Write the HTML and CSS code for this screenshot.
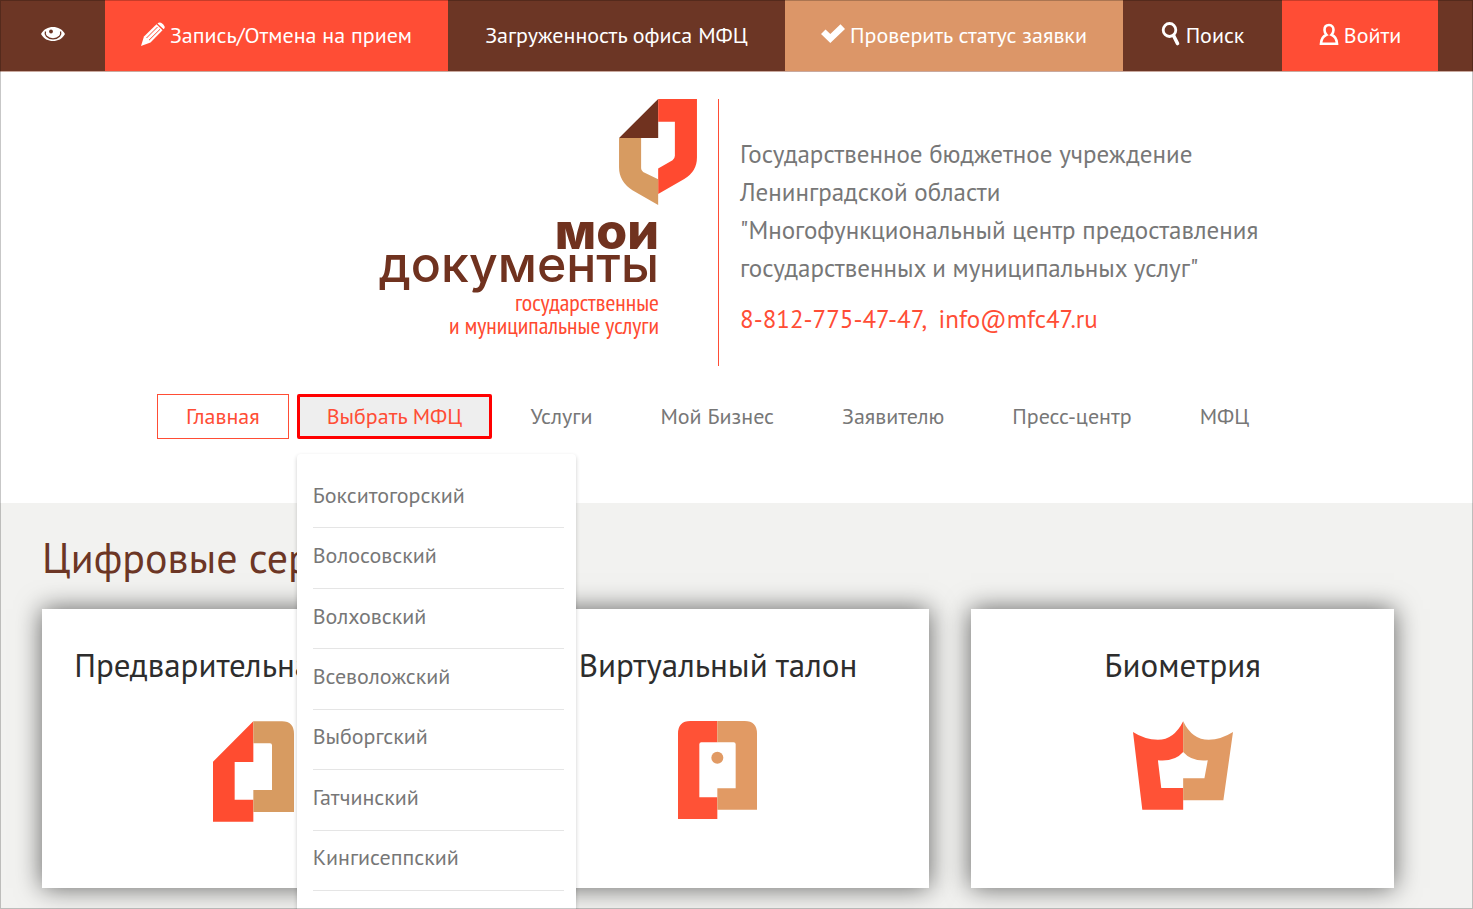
FILE: index.html
```html
<!DOCTYPE html>
<html lang="ru">
<head>
  <meta charset="UTF-8" />
  <meta name="viewport" content="width=device-width, initial-scale=1.0" />
  <title>Мои документы</title>
  <link rel="stylesheet" href="styles.css">
</head>
<body>
  <div class="topbar">
    <a class="topbar-item" href="#" aria-label="Версия для слабовидящих">
      <svg width="24" height="16" viewBox="0 0 24 16">
        <path d="M0 8C3 3 7 1 12 1s9 2 12 7c-3 5-7 7-12 7S3 13 0 8z" fill="#fff"/>
        <path d="M4.500 5.500Q3.500 8 5.500 10.200 8 12.800 12 12.800t6.500-2.600Q20.500 8 19.500 5.500" stroke="#6c3625" stroke-width="1.300" fill="none"/>
        <circle cx="10" cy="5.500" r="1.900" fill="#6c3625"/>
      </svg>
    </a>
    <a class="topbar-item red" href="#">
      <svg width="24" height="24" viewBox="0 0 24 24">
        <path d="M0 24L3 14.500 15.500 2.300l6 6L9.500 20.500z" fill="#fff"/>
        <path d="M16.500 1.500Q18 0 20 .8q2.500 1.200 3.500 3.400.6 1.600-.8 3z" fill="#fff"/>
        <path d="M5.500 16L16.500 5M8 18.200L19 7.300" stroke="#ff4d35" stroke-width="1" fill="none"/>
      </svg>
      <span>Запись/Отмена на прием</span>
    </a>
    <a class="topbar-item" href="#"><span>Загруженность офиса МФЦ</span></a>
    <a class="topbar-item tan" href="#">
      <svg width="24" height="24" viewBox="0 0 24 24">
        <path d="M0 12l4.500-4.500L9.300 12 19.500 2.200 24 7 9.300 21z" fill="#fff"/>
      </svg>
      <span>Проверить статус заявки</span>
    </a>
    <a class="topbar-item" href="#">
      <svg width="20" height="24" viewBox="0 0 20 24">
        <ellipse cx="8.500" cy="8" rx="6.300" ry="6.500" fill="none" stroke="#fff" stroke-width="2.800"/>
        <path d="M12.500 13.500l4 8" stroke="#fff" stroke-width="3.600" stroke-linecap="round"/>
      </svg>
      <span>Поиск</span>
    </a>
    <a class="topbar-item red" href="#">
      <svg width="20" height="24" viewBox="0 0 20 24">
        <path d="M10 3c-3 0-4.500 2.300-4.500 5 0 2 .8 3.600 2 4.800C4.500 14 2.300 17 2 21.700h16c-.3-4.700-2.500-7.700-5.500-8.900 1.200-1.200 2-2.800 2-4.800 0-2.700-1.500-5-4.500-5z" fill="none" stroke="#fff" stroke-width="2.600"/>
      </svg>
      <span>Войти</span>
    </a>
  </div>

  <header class="header">
    <a class="logo" href="#">
      <svg class="logo-mark" width="78" height="106" viewBox="0 0 233 317">
        <path d="M0 117L117 0v117z" fill="#70321f"/>
        <path d="M117 0h116v175q0 42-38 64l-78 45v-76l43-25q7-5 7-13V68h-50z" fill="#ff4a30"/>
        <path d="M0 117h66v90q0 7 6 11l45 22v77l-77-44Q0 247 0 205z" fill="#d79b61"/>
      </svg>
      <span class="logo-my">мои</span>
      <span class="logo-docs">документы</span>
      <span class="logo-sub">государственные<br>и муниципальные услуги</span>
    </a>
    <div class="about">
      <p>Государственное бюджетное учреждение<br>
        Ленинградской области<br>
        "Многофункциональный центр предоставления<br>
        государственных и муниципальных услуг"</p>
      <p class="contacts"><a href="tel:88127754747">8-812-775-47-47</a>,&nbsp; <a href="mailto:info@mfc47.ru">info@mfc47.ru</a></p>
    </div>
  </header>

  <nav>
    <ul class="menu">
      <li><a class="active" href="#">Главная</a></li>
      <li class="open">
        <a class="selected" href="#">Выбрать МФЦ</a>
        <div class="dropdown">
          <ul>
            <li><a href="#">Бокситогорский</a></li>
            <li><a href="#">Волосовский</a></li>
            <li><a href="#">Волховский</a></li>
            <li><a href="#">Всеволожский</a></li>
            <li><a href="#">Выборгский</a></li>
            <li><a href="#">Гатчинский</a></li>
            <li><a href="#">Кингисеппский</a></li>
          </ul>
        </div>
      </li>
      <li><a href="#">Услуги</a></li>
      <li><a href="#">Мой Бизнес</a></li>
      <li><a href="#">Заявителю</a></li>
      <li><a href="#">Пресс-центр</a></li>
      <li><a href="#">МФЦ</a></li>
    </ul>
  </nav>

  <main class="services">
    <h1>Цифровые сервисы</h1>
    <div class="cards">
      <a class="card" href="#">
        <h2>Предварительная запись</h2>
        <svg width="81" height="101" viewBox="0 0 243 301">
          <path d="M0 121L121 0v122H65v113h56v66H0z" fill="#ff4c30"/>
          <path d="M121 0h86q36 0 36 38v234H121v-66h56V72q0-6-6-6h-50z" fill="#d79b61"/>
        </svg>
      </a>
      <a class="card" href="#">
        <h2>Виртуальный талон</h2>
        <svg width="79" height="98" viewBox="0 0 237 294">
          <path d="M118 0v64H70q-6 0-6 6v159h54v65H0V38Q0 0 37 0z" fill="#ff5236"/>
          <path d="M118 0h82q37 0 37 38v228H118v-64h55V70q0-6-6-6h-49z" fill="#e19a64"/>
          <circle cx="118" cy="110" r="18" fill="#e19a64"/>
        </svg>
      </a>
      <a class="card" href="#">
        <h2>Биометрия</h2>
        <svg width="100" height="89" viewBox="0 0 301 267">
          <path d="M151 0Q123 56 75 56 35 56 0 33l28 234h123v-66H85l-10-83q50 5 76-25z" fill="#ff5236"/>
          <path d="M151 0q27 56 77 56 37 0 73-23l-29 205H151v-66h64l10-54q-48 5-74-25z" fill="#e19a64"/>
        </svg>
      </a>
    </div>
  </main>
</body>
</html>
```
FILE: styles.css
```css
* {
  box-sizing: border-box;
}
body {
  margin: 0;
  min-height: 100vh;
  display: flex;
  flex-direction: column;
  overflow: hidden;
  position: relative;
  font-family: "PT Sans", "Noto Sans", sans-serif;
  font-size: 22px;
  color: #777;
  background-color: #fff;
}
/* thin frame round the page */
body::after {
  content: "";
  position: absolute;
  inset: 0;
  border: 1px solid rgba(0, 0, 0, 0.22);
  pointer-events: none;
  z-index: 20;
}
a {
  color: inherit;
  text-decoration: none;
}
ul {
  list-style: none;
  margin: 0;
  padding: 0;
}
p, h1, h2 {
  margin: 0;
  font-weight: normal;
}

.topbar {
  display: grid;
  grid-template-columns: 105fr 343fr 337fr 338fr 159fr 156fr;
  padding-right: 35px;
  background-color: #6c3625;
  border-bottom: 1px solid #c9a99e;
}
.topbar-item {
  display: flex;
  align-items: center;
  justify-content: center;
  gap: 5px;
  height: 71px;
  padding-bottom: 4px;
  color: #fff;
  white-space: nowrap;
}
.topbar-item span {
  padding-top: 2px;
}
.red {
  background-color: #ff4d35;
}
.tan {
  background-color: #dc9668;
}

.header {
  display: grid;
  grid-template-columns: 718fr 755fr;
  padding-top: 27px;
}
.logo {
  display: flex;
  flex-direction: column;
  align-items: flex-end;
  padding-right: 59px;
  color: #70321f;
  font-family: Inter, sans-serif;
}
.logo-mark {
  margin-right: -38px;
}
.logo-my {
  margin-top: 10px;
  font-size: 50px;
  line-height: 33px;
  font-weight: 800;
}
.logo-docs {
  font-size: 50px;
  line-height: 33px;
  font-weight: 500;
}
.logo-sub {
  margin-top: 10px;
  font-family: "PT Sans Narrow", "Roboto Condensed", sans-serif;
  font-size: 24px;
  line-height: 23px;
  text-align: right;
  color: #ff4a30;
}
.about {
  min-height: 267px;
  padding: 36px 0 0 21px;
  border-left: 1px solid #ff4d35;
  font-size: 25px;
  line-height: 38px;
}
.contacts {
  margin-top: 13px;
  color: #ff4d35;
}

.menu {
  display: flex;
  gap: 8px;
  padding: 28px 157px 64px;
}
.menu > li > a {
  display: block;
  padding: 0 29px;
  border: 1px solid transparent;
  line-height: 43px;
  white-space: nowrap;
}
.menu > li > a.active {
  padding: 0 28px;
  border-color: #ff4d35;
  color: #ff4d35;
}
.menu > li > a.selected {
  padding: 0 27px;
  border: 3px solid #f00;
  border-radius: 2px;
  line-height: 39px;
  background-color: #eee;
  color: #ff4d35;
}
.open {
  position: relative;
}
.dropdown {
  position: absolute;
  top: 60px;
  left: 0;
  z-index: 10;
  width: 279px;
  padding: 14px 12px 60px 16px;
  border-radius: 4px;
  background-color: #fff;
  box-shadow: 0 2px 4px rgba(0, 0, 0, 0.2);
}
.dropdown ul {
  display: grid;
  grid-auto-rows: 1fr;
  height: 423px;
}
.dropdown li {
  display: flex;
  align-items: center;
  padding-bottom: 6px;
  border-bottom: 1px solid #e5e5e5;
}

.services {
  flex: 1;
  padding: 28px 79px 21px 42px;
  background-color: #f2f2f0;
}
.services h1 {
  font-size: 42px;
  line-height: 54px;
  color: #6c3625;
}
.cards {
  display: grid;
  grid-template-columns: repeat(3, 1fr);
  gap: 42px;
  margin-top: 24px;
}
.card {
  display: flex;
  flex-direction: column;
  align-items: center;
  min-height: 279px;
  padding-top: 34px;
  background-color: #fff;
  box-shadow: 0 0 24px rgba(0, 0, 0, 0.6);
}
.card h2 {
  margin-bottom: 34px;
  font-size: 33px;
  line-height: 44px;
  color: #2d2d2d;
  white-space: nowrap;
}
```
